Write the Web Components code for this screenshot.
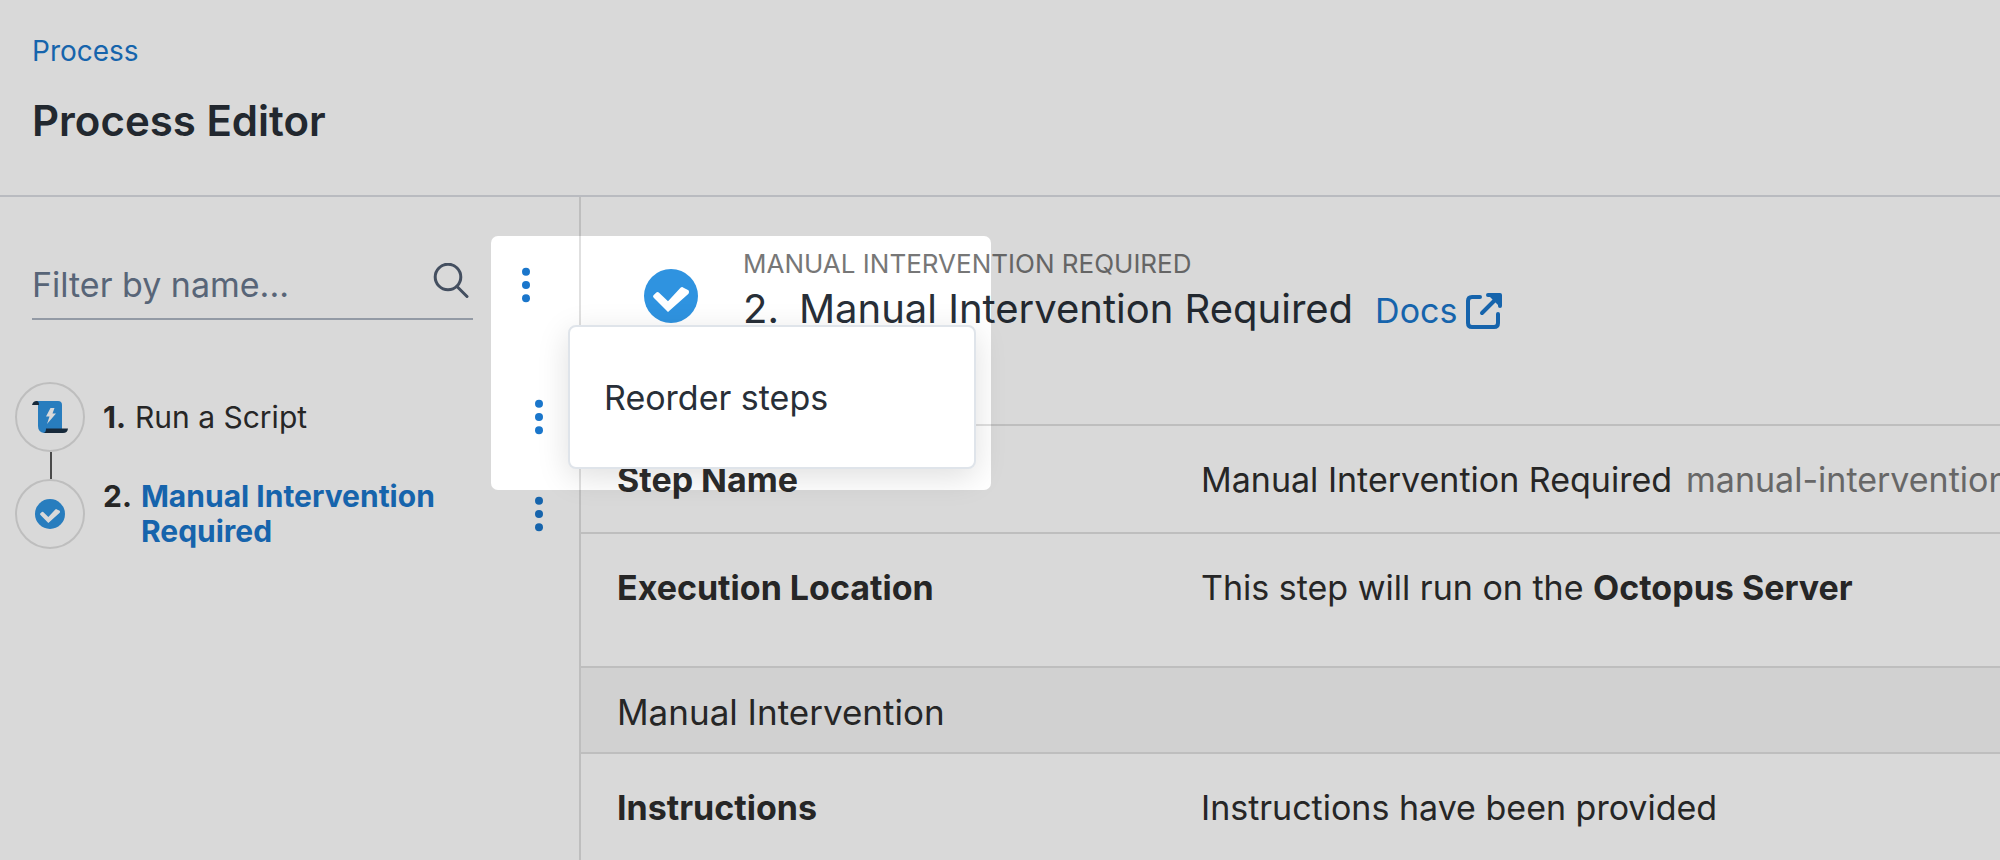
<!DOCTYPE html>
<html lang="en">
<head>
<meta charset="utf-8">
<title>Process Editor</title>
<style>
  html, body { height: 100%; margin: 0; overflow: hidden; }
  body {
    --link: #1a76cb;
    --ink: #282f38;
    --text: #2d2d2d;
    --muted: #777777;
    --line: #e0e0e0;
    --icon-blue: #2f93e0;
    font-family: Inter, "Liberation Sans", sans-serif;
    font-size: 34px;
    line-height: 44px;
    color: var(--text);
    background: #fff;
  }
</style>
</head>
<body>
<process-editor></process-editor>

<script>
  const define = (name, html) => {
    const template = document.createElement('template');
    template.innerHTML = `<style>*, ::before, ::after { box-sizing: border-box; }</style>` + html;
    customElements.define(name, class extends HTMLElement {
      constructor() {
        super();
        this.attachShadow({ mode: 'open' }).append(template.content.cloneNode(true));
      }
    });
  };

  define('check-icon', `
    <style>
      :host { display: block; width: 54px; height: 54px; flex: none; }
      svg { display: block; width: 100%; height: 100%; }
    </style>
    <svg viewBox="0 0 54 54" aria-hidden="true">
      <circle cx="27" cy="27" r="27" fill="var(--icon-blue)"/>
      <path d="M12.500 31.500l-3-3q-1-1.200 0-2.300l2.800-2.700q1.300-1 2.500 0l9.200 8.700 12.500-13.500q1.600-1.200 3 0l5 2.500q1.200 1.800 0 3.500L24 43z" fill="#fff"/>
    </svg>`);

  define('script-icon', `
    <style>
      :host { display: block; width: 36px; height: 34px; flex: none; }
      svg { display: block; width: 100%; height: 100%; }
    </style>
    <svg viewBox="0 0 36 34" aria-hidden="true">
      <path d="M4 1h22q4 0 4 4v24H14v4h-2q-6-1-6-7V5z" fill="var(--icon-blue)"/>
      <path d="M0 5q1-4 4.500-4 2.500 0 2.500 4z" fill="#1c3145"/>
      <path d="M14 28.500h22q-.5 4.500-5 4.500H11.500q2.500-.5 2.500-4.500z" fill="#1c3145"/>
      <path d="M18.500 8h4l-2 5.500h3.500L15 24l2.500-7.500H14z" fill="#fff"/>
    </svg>`);

  define('overflow-button', `
    <style>
      :host { display: block; position: relative; flex: none; }
      button { display: block; width: 32px; height: 44px; padding: 0; border: 0; background: none; color: var(--link); cursor: pointer; }
      svg { display: block; width: 32px; height: 44px; }
    </style>
    <button type="button" aria-label="More actions">
      <svg viewBox="0 0 32 44" fill="currentColor" aria-hidden="true">
        <circle cx="16" cy="8.800" r="4"/><circle cx="16" cy="22" r="4"/><circle cx="16" cy="35.200" r="4"/>
      </svg>
    </button>
    <slot></slot>`);

  define('popup-menu', `
    <style>
      :host {
        position: absolute; top: 62px; left: 58px; width: 408px; box-sizing: border-box;
        padding: 36px 0; border: 2px solid #dfe4ea; border-radius: 8px;
        background: #fff; box-shadow: 0 8px 32px rgba(0, 0, 0, .13);
      }
      button { display: block; width: 100%; padding: 13px 34px 11px; border: 0; background: none; font: inherit; color: var(--ink); text-align: left; cursor: pointer; }
    </style>
    <div role="menu"><button type="button" role="menuitem"><slot></slot></button></div>`);

  define('page-header', `
    <style>
      :host { display: flex; flex-direction: column; align-items: flex-start; gap: 24px; padding: 31px 32px 48px; border-bottom: 2px solid #dadce2; }
      a { font-size: 28px; line-height: 40px; color: var(--link); text-decoration: none; }
      h1 { margin: 0; font-size: 42px; line-height: 52px; font-weight: 600; color: var(--ink); }
    </style>
    <a href="#process">Process</a>
    <h1><slot></slot></h1>`);

  define('filter-field', `
    <style>
      :host { display: flex; align-items: center; flex: 1; min-width: 0; padding: 12px 4px 11px 0; border-bottom: 2px solid #adb5c2; }
      input { flex: 1; min-width: 0; height: 44px; padding: 0; border: 0; outline: 0; background: none; font: inherit; color: var(--ink); }
      input::placeholder { color: #68778d; opacity: 1; }
      svg { display: block; flex: none; width: 36px; height: 44px; }
    </style>
    <input type="text" placeholder="Filter by name..." aria-label="Filter by name">
    <svg viewBox="0 0 36 44" fill="none" stroke="#505d71" stroke-width="3" stroke-linecap="round" aria-hidden="true">
      <circle cx="15" cy="14" r="12.800"/><path d="M24 23.500l10 10"/>
    </svg>`);

  define('step-item', `
    <style>
      :host { display: flex; align-items: center; gap: 18px; font-size: 30px; line-height: 35px; }
      .badge { display: flex; align-items: center; justify-content: center; flex: none; width: 70px; height: 70px; border: 2px solid var(--line); border-radius: 50%; }
      ::slotted(check-icon) { width: 30px; height: 30px; }
      a { display: flex; flex: 1; min-width: 0; gap: 9px; color: inherit; text-decoration: none; }
      b { font-weight: 700; }
      :host([selected]) .name { font-weight: 700; color: var(--link); }
    </style>
    <span class="badge"><slot name="icon"></slot></span>
    <a href="#step"><b><slot name="number"></slot></b><span class="name"><slot></slot></span></a>
    <overflow-button></overflow-button>`);

  define('step-sidebar', `
    <style>
      :host { display: block; flex: none; box-sizing: border-box; width: 581px; border-right: 2px solid var(--line); }
      .filter { display: flex; align-items: flex-start; gap: 37px; padding: 54px 37px 0 32px; }
      .filter overflow-button { margin-top: 12px; }
      .steps { padding: 62px 24px 0 15px; }
      .link { width: 2px; height: 27px; margin-left: 35px; background: #575757; }
    </style>
    <div class="filter">
      <filter-field></filter-field>
      <overflow-button><popup-menu>Reorder steps</popup-menu></overflow-button>
    </div>
    <div class="steps">
      <step-item><script-icon slot="icon"></script-icon><span slot="number">1.</span>Run a Script</step-item>
      <div class="link"></div>
      <step-item selected><check-icon slot="icon"></check-icon><span slot="number">2.</span>Manual Intervention Required</step-item>
    </div>`);

  define('step-heading', `
    <style>
      :host { display: flex; align-items: flex-start; gap: 45px; padding: 51px 32px 89px 63px; border-bottom: 2px solid var(--line); white-space: nowrap; }
      check-icon { margin-top: 21px; }
      .kind { font-size: 26px; line-height: 32px; color: var(--muted); text-transform: uppercase; }
      .title { display: flex; align-items: baseline; gap: 22px; margin-top: 3px; }
      h2 { display: flex; gap: 20px; margin: 0; font-size: 40px; line-height: 52px; font-weight: 400; color: var(--ink); }
      a { display: flex; align-items: center; gap: 8px; color: var(--link); text-decoration: none; }
      svg { display: block; width: 38px; height: 38px; }
    </style>
    <check-icon></check-icon>
    <div>
      <div class="kind">Manual Intervention Required</div>
      <div class="title">
        <h2><span>2.</span><span>Manual Intervention Required</span></h2>
        <a href="#docs">Docs
          <svg viewBox="0 0 38 38" fill="none" stroke="currentColor" stroke-width="4" stroke-linecap="round" stroke-linejoin="round" aria-hidden="true">
            <path d="M15 5H7Q3 5 3 9v22q0 4 4 4h22q4 0 4-4v-9M17 21L34 4"/>
            <path d="M23 3h12v12z" fill="currentColor" stroke="none"/><path d="M23 3h12v11"/>
          </svg>
        </a>
      </div>
    </div>`);

  define('detail-row', `
    <style>
      :host { display: flex; padding: 32px 0 30px 36px; border-bottom: 2px solid var(--line); white-space: nowrap; }
      :host([roomy]) { padding-bottom: 56px; }
      .label { flex: 0 0 584px; font-weight: 700; }
      .value { flex: 1; min-width: 0; }
    </style>
    <div class="label"><slot name="label"></slot></div>
    <div class="value"><slot></slot></div>`);

  define('section-title', `
    <style>
      :host { display: block; padding: 22px 36px 18px; border-bottom: 2px solid var(--line); background: #f6f6f6; }
      h3 { margin: 0; font-size: 35px; line-height: 44px; font-weight: 400; }
    </style>
    <h3><slot></slot></h3>`);

  define('step-details', `
    <style>
      :host { display: block; flex: 1; min-width: 0; overflow: hidden; }
      .slug { margin-left: 14px; color: #7a7a7a; }
    </style>
    <step-heading></step-heading>
    <detail-row><span slot="label">Step Name</span>Manual Intervention Required<span class="slug">manual-intervention</span></detail-row>
    <detail-row roomy><span slot="label">Execution Location</span>This step will run on the <strong>Octopus Server</strong></detail-row>
    <section-title>Manual Intervention</section-title>
    <detail-row><span slot="label">Instructions</span>Instructions have been provided</detail-row>`);

  /* Dims the page and leaves one bright window around the open menu. */
  define('spot-light', `
    <style>
      :host { position: absolute; top: 236px; left: 491px; width: 500px; height: 254px; border-radius: 7px; box-shadow: 0 0 0 9999px rgba(0, 0, 0, .15); pointer-events: none; z-index: 2; }
    </style>`);

  define('process-editor', `
    <style>
      :host { display: flex; flex-direction: column; position: relative; height: 100%; overflow: hidden; }
      .body { display: flex; flex: 1; min-height: 0; }
      step-sidebar { position: relative; z-index: 1; }
    </style>
    <page-header>Process Editor</page-header>
    <div class="body">
      <step-sidebar></step-sidebar>
      <step-details></step-details>
    </div>
    <spot-light></spot-light>`);
</script>
</body>
</html>
